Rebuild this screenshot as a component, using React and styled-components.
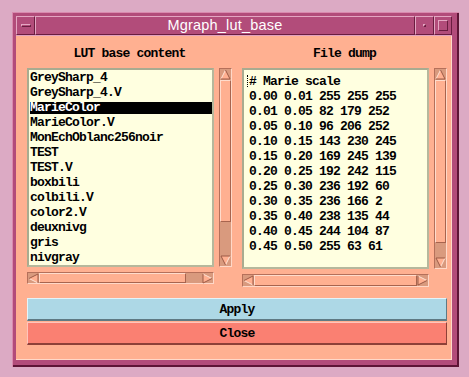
import styled, { createGlobalStyle } from 'styled-components';

const GlobalStyle = createGlobalStyle`
  html, body {
    margin: 0;
    padding: 0;
    background: #dcaac4;
  }
  #root {
    padding: 12px 0 0 12px;
  }
`;

const MONO = `'Liberation Mono', 'DejaVu Sans Mono', monospace`;

const Frame = styled.div`
  box-sizing: border-box;
  width: 447px;
  height: 355px;
  padding: 4px 7px 7px 4px;
  background: #b24c7a;
  box-shadow: inset 1px 1px 0 #d98aae, inset -2px -2px 0 #5e1536;
  display: flex;
  flex-direction: column;
`;

const TitleBar = styled.div`
  display: flex;
  height: 20px;
  box-sizing: border-box;
  border-bottom: 1px solid #e2a2c0;
`;

const TitleButton = styled.div`
  box-sizing: border-box;
  width: ${(p) => p.w || 19}px;
  height: 19px;
  border: 1px solid;
  border-color: #e4a6c2 #6a1d40 #6a1d40 #e4a6c2;
  display: flex;
  align-items: center;
  justify-content: center;
`;

const MenuBar = styled.div`
  width: 10px;
  height: 3px;
  box-sizing: border-box;
  border: 1px solid;
  border-color: #e4a6c2 #6a1d40 #6a1d40 #e4a6c2;
`;

const MinDot = styled.div`
  width: 3px;
  height: 3px;
  box-sizing: border-box;
  border: 1px solid;
  border-color: #e4a6c2 #6a1d40 #6a1d40 #e4a6c2;
`;

const MaxBox = styled.div`
  width: 10px;
  height: 11px;
  box-sizing: border-box;
  border: 1px solid;
  border-color: #e4a6c2 #6a1d40 #6a1d40 #e4a6c2;
`;

const Title = styled.div`
  flex: 1;
  box-sizing: border-box;
  border: 1px solid;
  border-color: #e4a6c2 #6a1d40 #6a1d40 #e4a6c2;
  height: 19px;
  color: #ffffff;
  font-family: 'Liberation Sans', 'DejaVu Sans', sans-serif;
  font-size: 14.5px;
  line-height: 17px;
  text-align: center;
  letter-spacing: 0.2px;
`;

const Content = styled.div`
  flex: 1;
  background: #ffb091;
  box-shadow: inset -1px -1px 0 #ffd9c9;
  padding: 10px 5px 15px 11px;
  display: flex;
  flex-direction: column;
  font-family: ${MONO};
  font-weight: bold;
  font-size: 13px;
  letter-spacing: -0.8px;
  color: #000;
`;

const Columns = styled.div`
  display: flex;
  gap: 10px;
  align-items: flex-start;
`;

const Column = styled.div`
  width: 205px;
  display: flex;
  flex-direction: column;
`;

const Heading = styled.div`
  line-height: 15px;
  text-align: center;
  margin-bottom: 7px;
`;

const ListRow = styled.div`
  display: flex;
  gap: 5px;
  height: ${(p) => p.h}px;
`;

const ListBox = styled.div`
  position: relative;
  flex: 1;
  background: #ffffe0;
  border: 2px solid #b6b89c;
  border-top-color: #a9ab90;
  border-left-color: #a9ab90;
  padding: ${(p) => p.pad};
  overflow: hidden;
  white-space: pre;
`;

const Line = styled.div`
  height: 15px;
  line-height: 15px;
  color: ${(p) => (p.selected ? '#ffffff' : '#000000')};
  background: ${(p) =>
    p.selected ? 'linear-gradient(#000, #000) 0 2px / 100% 12px no-repeat' : 'none'};
`;

const Cursor = styled.span`
  position: absolute;
  left: 3px;
  top: 5px;
  height: 12px;
  border-left: 1px dotted #000;
`;

const Trough = styled.div`
  box-sizing: border-box;
  display: flex;
  flex-direction: ${(p) => (p.vertical ? 'column' : 'row')};
  flex: 0 0 ${(p) => (p.vertical ? '13px' : `${p.size}px`)};
  height: ${(p) => (p.vertical ? 'auto' : `${p.size}px`)};
  margin-right: ${(p) => (p.vertical ? 0 : 18)}px;
  margin-top: ${(p) => (p.vertical ? 0 : 5)}px;
  background: #d99a7e;
  border: 1px solid;
  border-color: #b5705a #ffd8c8 #ffd8c8 #b5705a;
`;

const Thumb = styled.div`
  box-sizing: border-box;
  background: #ffb091;
  border: 1px solid;
  border-color: #ffdccc #a8644e #a8644e #ffdccc;
`;

const ArrowBox = styled.svg`
  flex: 0 0 auto;
  display: block;
`;

const ButtonStack = styled.div`
  margin-top: 11px;
  display: flex;
  flex-direction: column;
  gap: 1px;
`;

const ActionButton = styled.button`
  height: 23px;
  width: 100%;
  margin: 0;
  padding: 0;
  font: inherit;
  letter-spacing: inherit;
  color: #000;
  background: ${(p) => p.bg};
  border: 1px solid;
  border-color: ${(p) => p.light} ${(p) => p.dark} ${(p) => p.dark} ${(p) => p.light};
  border-width: 1px 1px 2px 1px;
  text-align: center;
  cursor: pointer;
`;

const rotations = { up: 0, right: 90, down: 180, left: 270 };

function Arrow({ dir }) {
  return (
    <ArrowBox width="11" height="11" viewBox="0 0 11 11">
      <g transform={`rotate(${rotations[dir]} 5.5 5.5)`}>
        <polygon points="5.5,1 1,10 10,10" fill="#ffb091" />
        <line x1="5.5" y1="1" x2="1" y2="10" stroke="#ffe2d4" strokeWidth="1" />
        <line x1="5.5" y1="1" x2="10" y2="10" stroke="#9c5a46" strokeWidth="1" />
        <line x1="1" y1="10" x2="10" y2="10" stroke="#9c5a46" strokeWidth="1" />
      </g>
    </ArrowBox>
  );
}

function ScrollBar({ vertical, thumb, size }) {
  const span = `${thumb * 100}%`;
  return (
    <Trough vertical={vertical} size={size}>
      <Arrow dir={vertical ? 'up' : 'left'} />
      <div style={{ flex: 1, display: 'flex', flexDirection: vertical ? 'column' : 'row' }}>
        <Thumb style={{ flexBasis: span }} />
      </div>
      <Arrow dir={vertical ? 'down' : 'right'} />
    </Trough>
  );
}

const luts = [
  'GreySharp_4',
  'GreySharp_4.V',
  'MarieColor',
  'MarieColor.V',
  'MonEchOblanc256noir',
  'TEST',
  'TEST.V',
  'boxbili',
  'colbili.V',
  'color2.V',
  'deuxnivg',
  'gris',
  'nivgray',
];

const dump = [
  '# Marie scale',
  '0.00 0.01 255 255 255',
  '0.01 0.05 82 179 252',
  '0.05 0.10 96 206 252',
  '0.10 0.15 143 230 245',
  '0.15 0.20 169 245 139',
  '0.20 0.25 192 242 115',
  '0.25 0.30 236 192 60',
  '0.30 0.35 236 166 2',
  '0.35 0.40 238 135 44',
  '0.40 0.45 244 104 87',
  '0.45 0.50 255 63 61',
];

export default function App() {
  return (
    <>
      <GlobalStyle />
      <Frame>
        <TitleBar>
          <TitleButton>
            <MenuBar />
          </TitleButton>
          <Title>Mgraph_lut_base</Title>
          <TitleButton>
            <MinDot />
          </TitleButton>
          <TitleButton w={18}>
            <MaxBox />
          </TitleButton>
        </TitleBar>
        <Content>
          <Columns>
            <Column>
              <Heading>LUT base content</Heading>
              <ListRow h={199}>
                <ListBox pad="0 0 0 1px">
                  {luts.map((name) => (
                    <Line key={name} selected={name === 'MarieColor'}>
                      {name}
                    </Line>
                  ))}
                </ListBox>
                <ScrollBar vertical thumb={0.81} />
              </ListRow>
              <ScrollBar thumb={0.9} size={12} />
            </Column>
            <Column>
              <Heading>File dump</Heading>
              <ListRow h={201}>
                <ListBox pad="4px 0 0 5px">
                  <Cursor />
                  {dump.map((row) => (
                    <Line key={row}>{row}</Line>
                  ))}
                </ListBox>
                <ScrollBar vertical thumb={0.92} />
              </ListRow>
              <ScrollBar thumb={1} size={13} />
            </Column>
          </Columns>
          <ButtonStack>
            <ActionButton bg="#add8e6" light="#e4f4fa" dark="#5f7a84">
              Apply
            </ActionButton>
            <ActionButton bg="#fa8072" light="#ffc4bc" dark="#8e4038">
              Close
            </ActionButton>
          </ButtonStack>
        </Content>
      </Frame>
    </>
  );
}
